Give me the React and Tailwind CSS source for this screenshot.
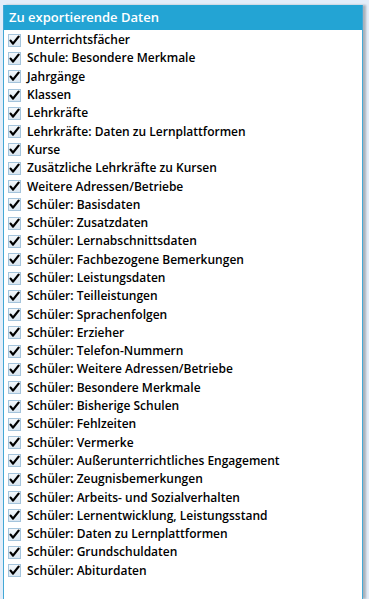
import React from 'react';

const items = [
  'Unterrichtsfächer',
  'Schule: Besondere Merkmale',
  'Jahrgänge',
  'Klassen',
  'Lehrkräfte',
  'Lehrkräfte: Daten zu Lernplattformen',
  'Kurse',
  'Zusätzliche Lehrkräfte zu Kursen',
  'Weitere Adressen/Betriebe',
  'Schüler: Basisdaten',
  'Schüler: Zusatzdaten',
  'Schüler: Lernabschnittsdaten',
  'Schüler: Fachbezogene Bemerkungen',
  'Schüler: Leistungsdaten',
  'Schüler: Teilleistungen',
  'Schüler: Sprachenfolgen',
  'Schüler: Erzieher',
  'Schüler: Telefon-Nummern',
  'Schüler: Weitere Adressen/Betriebe',
  'Schüler: Besondere Merkmale',
  'Schüler: Bisherige Schulen',
  'Schüler: Fehlzeiten',
  'Schüler: Vermerke',
  'Schüler: Außerunterrichtliches Engagement',
  'Schüler: Zeugnisbemerkungen',
  'Schüler: Arbeits- und Sozialverhalten',
  'Schüler: Lernentwicklung, Leistungsstand',
  'Schüler: Daten zu Lernplattformen',
  'Schüler: Grundschuldaten',
  'Schüler: Abiturdaten',
];

const CheckBox = () => (
  <span className="flex h-[13px] w-[13px] shrink-0 items-center justify-center border border-[#a4c4dc] bg-gradient-to-b from-[#f4f8fb] to-[#d9e6f1]">
    <svg width="11" height="11" viewBox="0 0 11 11">
      <path d="M1.6 5.6 L4 8.6 L9.6 1.6" fill="none" stroke="#000" strokeWidth="2.3" strokeLinecap="round" strokeLinejoin="round" />
    </svg>
  </span>
);

export default function App() {
  return (
    <div className="h-[599px] overflow-hidden bg-[#e3edf9] pl-[3px] pr-[6px] pt-[5px]" style={{ fontFamily: '"Open Sans", "Noto Sans", sans-serif' }}>
      <div className="flex h-full flex-col border-x border-[#43a8d6] bg-white shadow-[3px_0_2px_rgba(0,0,0,0.25)]">
        <div className="flex h-[25px] items-center bg-[#23a4d4] px-[5px] text-[13px] font-semibold text-white">
          Zu exportierende Daten
        </div>
        <ul className="flex flex-col pt-[1px]">
          {items.map((label) => (
            <li key={label} className="flex h-[18.3px] items-center gap-[6px] pl-[4px] text-[12px] font-semibold text-black">
              <CheckBox />
              <span className="leading-none">{label}</span>
            </li>
          ))}
        </ul>
      </div>
    </div>
  );
}
